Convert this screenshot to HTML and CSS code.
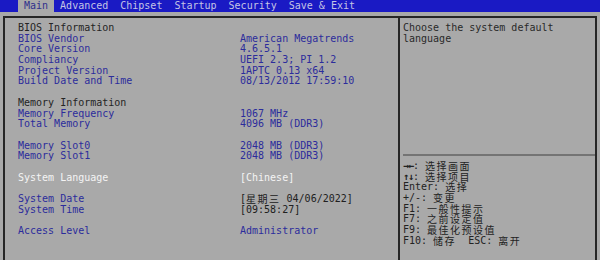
FILE: index.html
```html
<!DOCTYPE html>
<html lang="zh-CN">
<head>
    <meta charset="UTF-8">
    <title>BIOS Setup - Main</title>
    <link rel="stylesheet" href="styles.css">
</head>
<body>
    <div class="menu">
        <span class="tab active">Main</span>
        <span class="tab">Advanced</span>
        <span class="tab">Chipset</span>
        <span class="tab">Startup</span>
        <span class="tab">Security</span>
        <span class="tab">Save &amp; Exit</span>
    </div>
    <div class="frame">
        <div class="main-pane">
            <div class="row"><span class="head">BIOS Information</span></div>
            <div class="row"><span>BIOS Vendor</span><span>American Megatrends</span></div>
            <div class="row"><span>Core Version</span><span>4.6.5.1</span></div>
            <div class="row"><span>Compliancy</span><span>UEFI 2.3; PI 1.2</span></div>
            <div class="row"><span>Project Version</span><span>1APTC 0.13 x64</span></div>
            <div class="row"><span>Build Date and Time</span><span>08/13/2012 17:59:10</span></div>
            <div class="row blank"></div>
            <div class="row"><span class="head">Memory Information</span></div>
            <div class="row"><span>Memory Frequency</span><span>1067 MHz</span></div>
            <div class="row"><span>Total Memory</span><span>4096 MB (DDR3)</span></div>
            <div class="row blank"></div>
            <div class="row"><span>Memory Slot0</span><span>2048 MB (DDR3)</span></div>
            <div class="row"><span>Memory Slot1</span><span>2048 MB (DDR3)</span></div>
            <div class="row blank"></div>
            <div class="row selected"><span>System Language</span><span>[Chinese]</span></div>
            <div class="row blank"></div>
            <div class="row"><span>System Date</span><span class="edit">[<span class="cjk">星期三</span> 04/06/2022]</span></div>
            <div class="row"><span>System Time</span><span class="edit">[09:58:27]</span></div>
            <div class="row blank"></div>
            <div class="row"><span>Access Level</span><span>Administrator</span></div>
        </div>
        <div class="side-pane">
            <div class="help">
                Choose the system default<br>
                language
            </div>
            <div class="keys">
                <div><span class="arrow">→←</span>: <span class="cjk">选择画面</span></div>
                <div><span class="arrow">↑↓</span>: <span class="cjk">选择项目</span></div>
                <div>Enter: <span class="cjk">选择</span></div>
                <div>+/-: <span class="cjk">变更</span></div>
                <div>F1: <span class="cjk">一般性提示</span></div>
                <div>F7: <span class="cjk">之前设定值</span></div>
                <div>F9: <span class="cjk">最佳化预设值</span></div>
                <div>F10: <span class="cjk">储存</span>&nbsp; ESC: <span class="cjk">离开</span></div>
            </div>
        </div>
    </div>
</body>
</html>
```

FILE: styles.css
```css
body {
    margin: 0;
    background: #a9a9a9;
    font-family: "DejaVu Sans Mono", "Liberation Mono", "Noto Sans CJK SC", monospace;
    font-size: 10px;
    color: #2c2c9c;
    height: 260px;
    overflow: hidden;
}
.menu {
    display: flex;
    height: 12px;
    padding-left: 18px;
    background: #1a1ac4;
    line-height: 12px;
}
.tab {
    padding: 0 6px;
    color: #c4c4e4;
    white-space: pre;
}
.tab.active {
    background: #a9a9a9;
    color: #30308c;
}
.frame {
    display: grid;
    grid-template-columns: 393px 1fr;
    margin: 4px 3px 0 3px;
    height: 244px;
    border: 2px solid #262626;
    border-bottom: none;
}
.main-pane {
    padding: 5px 0 0 13px;
}
.row {
    display: grid;
    grid-template-columns: 222px 1fr;
    height: 10.7px;
    line-height: 10.7px;
    white-space: pre;
}
.head {
    color: #242424;
}
.selected {
    color: #f4f4f4;
}
.edit {
    color: #202020;
}
.cjk {
    display: inline-block;
    height: 10px;
    overflow: visible;
    vertical-align: top;
    font-family: "Noto Sans CJK SC", sans-serif;
    font-size: 10px;
    line-height: 10px;
    letter-spacing: 1.5px;
}
.side-pane {
    border-left: 2px solid #262626;
    padding-left: 3px;
    display: flex;
    flex-direction: column;
}
.help {
    height: 131px;
    padding-top: 5px;
    line-height: 10.7px;
    color: #2a2a2a;
    border-bottom: 2px solid #747474;
}
.keys {
    padding-top: 5px;
    color: #222222;
    line-height: 10.7px;
}
.keys div {
    height: 10.7px;
}
.arrow {
    font-weight: bold;
    letter-spacing: -1px;
}
```
